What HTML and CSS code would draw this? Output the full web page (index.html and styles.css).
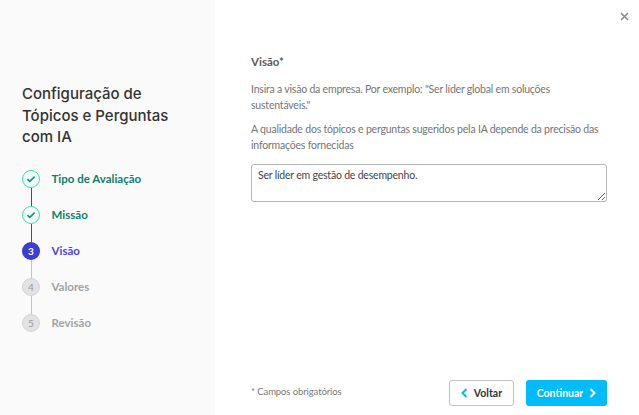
FILE: index.html
```html
<!DOCTYPE html>
<html lang="pt">
<head>
<meta charset="utf-8">
<title>Configuração de Tópicos e Perguntas com IA</title>
<link rel="stylesheet" href="styles.css">
</head>
<body>
<div class="modal">
  <aside class="side">
    <h1 class="side-title">Configuração de Tópicos e Perguntas com IA</h1>
    <ol class="steps">
      <li class="step done">
        <span class="dot"><svg width="10" height="8" viewBox="0 0 12 10"><path d="M1.5 5.2 4.5 8 10.5 2" fill="none" stroke="#11967f" stroke-width="2"/></svg></span>
        <span class="label">Tipo de Avaliação</span>
      </li>
      <li class="step done">
        <span class="dot"><svg width="10" height="8" viewBox="0 0 12 10"><path d="M1.5 5.2 4.5 8 10.5 2" fill="none" stroke="#11967f" stroke-width="2"/></svg></span>
        <span class="label">Missão</span>
      </li>
      <li class="step current"><span class="dot">3</span><span class="label">Visão</span></li>
      <li class="step todo"><span class="dot">4</span><span class="label">Valores</span></li>
      <li class="step todo"><span class="dot">5</span><span class="label">Revisão</span></li>
    </ol>
  </aside>
  <main class="main">
    <div class="close-row">
      <svg class="close" width="9" height="9" viewBox="0 0 9 9"><path d="M1 1 8 8M8 1 1 8" stroke="#8a8a8a" stroke-width="1.6"/></svg>
    </div>
    <section class="content">
      <h2 class="field-title">Visão*</h2>
      <p class="hint">Insira a visão da empresa. Por exemplo: "Ser líder global em soluções sustentáveis."</p>
      <p class="hint">A qualidade dos tópicos e perguntas sugeridos pela IA depende da precisão das informações fornecidas</p>
      <textarea class="input">Ser líder em gestão de desempenho.</textarea>
    </section>
    <footer class="foot">
      <span class="req">* Campos obrigatórios</span>
      <div class="actions">
        <button class="btn back"><svg width="7" height="10" viewBox="0 0 7 10"><path d="M5.5 1 1.5 5 5.5 9" fill="none" stroke="#00bcfa" stroke-width="2"/></svg>Voltar</button>
        <button class="btn next">Continuar<svg width="7" height="10" viewBox="0 0 7 10"><path d="M1.5 1 5.5 5 1.5 9" fill="none" stroke="#fff" stroke-width="2"/></svg></button>
      </div>
    </footer>
  </main>
</div>
</body>
</html>
```
FILE: styles.css
```css
* { box-sizing: border-box; }
html, body { margin: 0; height: 100%; }
body { font-family: Lato, "Noto Sans", sans-serif; background: #fff; overflow: hidden; }
.modal { display: flex; width: 639px; height: 415px; }
.side { width: 215px; flex: none; background: #fafafa; padding: 83px 20px 0 22px; }
.side-title { margin: 0 0 13px; font-family: Inter, sans-serif; font-weight: 500; font-size: 15px; line-height: 21.5px; color: #333; }
.steps { list-style: none; margin: 0; padding: 0; }
.step { position: relative; display: flex; align-items: center; gap: 11.5px; height: 36px; font-size: 11.5px; font-weight: 700; }
.step:not(:last-child)::after { content: ""; position: absolute; left: 8.5px; top: 27px; width: 1.4px; height: 18px; background: #c4c4c4; }
.step.done::after { background: #0e6f5c; }
.dot { width: 18px; height: 18px; border-radius: 50%; display: flex; align-items: center; justify-content: center; flex: none; font-size: 10px; }
.done .dot { background: #f1fdf9; border: 1px solid #3edbb0; }
.done .label { color: #0e7f6c; }
.current .dot { background: #3d3dd1; color: #fff; font-weight: 700; }
.current .label { color: #4c45d9; }
.todo .dot { background: #e2e2e2; border: 1px solid #d4d4d4; color: #9a9a9a; font-weight: 400; }
.todo .label { color: #a2a2a2; }
.main { flex: 1; display: flex; flex-direction: column; padding: 0 32px 0 36px; min-width: 0; }
.close-row { display: flex; justify-content: flex-end; height: 55px; padding: 12px 0 0; margin-right: -22px; }
.content { flex: 1; }
.field-title { margin: 0 0 13px; font-size: 11.5px; line-height: 13px; font-weight: 700; color: #5c5c5c; }
.hint { margin: 0 0 8px; font-size: 10.5px; letter-spacing: -0.2px; line-height: 16px; color: #757575; }
.input { display: block; width: 356px; height: 38px; margin-top: 11px; padding: 3px 6px; border: 1px solid #b5b5b5; border-radius: 3px; font: 10.5px/14px Lato, sans-serif; letter-spacing: -0.2px; color: #444; background: #fff; }
.foot { display: flex; justify-content: space-between; align-items: center; height: 26px; margin-bottom: 9px; }
.req { font-size: 9.5px; letter-spacing: -0.1px; color: #777; margin-top: -3px; }
.actions { display: flex; gap: 12px; }
.btn { display: flex; align-items: center; justify-content: center; gap: 6px; width: 65px; height: 26px; padding: 0; border-radius: 3px; font: 700 10.5px Lato, sans-serif; }
.back { background: #fff; border: 1px solid #c2c2c2; color: #333; }
.next { width: 81px; background: #00bcfa; border: 0; color: #fff; }
```
